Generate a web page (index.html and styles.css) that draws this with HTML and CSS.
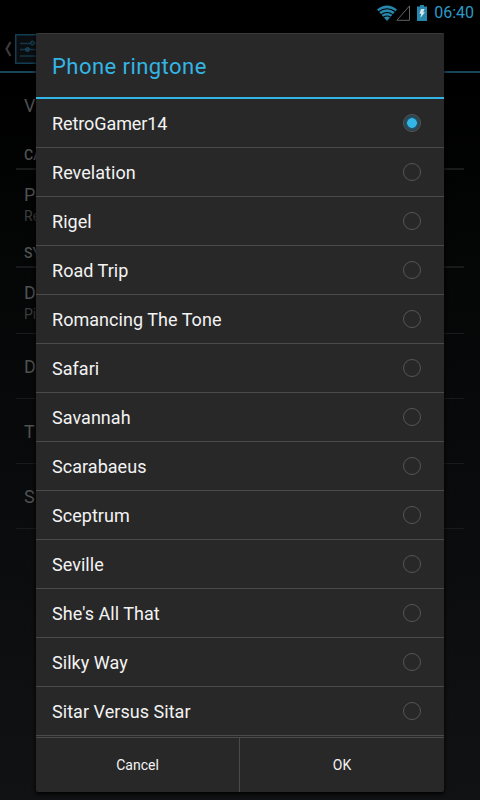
FILE: index.html
```
<!DOCTYPE html>
<html lang="en">
<head>
<meta charset="utf-8">
<title>Phone ringtone</title>
<link rel="stylesheet" href="styles.css">
</head>
<body>
<div class="screen">
  <header class="status">
    <svg class="wifi" width="20" height="16" viewBox="0 0 20 16"><path d="M0 4.4Q10-3.4 20 4.4L10 16Z" fill="#2787ac"/><path d="M1.5 6.8Q10 .6 18.5 6.8M4 9.6Q10 5.4 16 9.6M6.4 12.2Q10 9.8 13.6 12.2" fill="none" stroke="#000" stroke-width="1.1"/></svg>
    <svg class="signal" width="14" height="16" viewBox="0 0 14 16"><path d="M13.500.9V15.300H.9Z" fill="none" stroke="#626262"/></svg>
    <svg class="battery" width="10" height="16" viewBox="0 0 10 16"><path d="M3 0h4v1.5h3V16H0V1.500h3Z" fill="#2787ac"/><path d="M4 4h3.500L6.200 7.200H8L3.300 13l1-4.200H2.500Z" fill="#d5e5eb"/></svg>
    <span class="clock">06:40</span>
  </header>
  <div class="actionbar">
    <svg width="9" height="16" viewBox="0 0 9 16"><path d="M6.500 1 2.500 8l4 7" fill="none" stroke="#3b3b3b" stroke-width="2.200"/></svg>
    <svg width="30" height="30" viewBox="0 0 30 30"><rect x=".75" y=".75" width="28.500" height="28.500" fill="#0b0e10" stroke="#123d52" stroke-width="1.500"/><path d="M5 9.500h20M5 15.500h20M5 22h20" stroke="#153646" stroke-width="1.300"/><circle cx="17.500" cy="9" r="2" fill="#0e202a" stroke="#17465d"/><circle cx="12.500" cy="15.500" r="2" fill="#153b4d" stroke="#17465d"/></svg>
  </div>
  <main class="settings">
    <div class="item first">V</div>
    <div class="head">CA</div>
    <div class="item double"><span>P</span><small>Re</small></div>
    <div class="head">SY</div>
    <div class="item double lined"><span>D</span><small>Pi</small></div>
    <div class="item lined">D</div>
    <div class="item lined">T</div>
    <div class="item lined">S</div>
  </main>
  <section class="dialog">
    <h1>Phone ringtone</h1>
    <ul>
      <li><span class="tight">RetroGamer14</span><i class="radio on"></i></li>
      <li><span>Revelation</span><i class="radio"></i></li>
      <li><span>Rigel</span><i class="radio"></i></li>
      <li><span>Road Trip</span><i class="radio"></i></li>
      <li><span>Romancing The Tone</span><i class="radio"></i></li>
      <li><span>Safari</span><i class="radio"></i></li>
      <li><span>Savannah</span><i class="radio"></i></li>
      <li><span>Scarabaeus</span><i class="radio"></i></li>
      <li><span>Sceptrum</span><i class="radio"></i></li>
      <li><span>Seville</span><i class="radio"></i></li>
      <li><span>She's All That</span><i class="radio"></i></li>
      <li><span>Silky Way</span><i class="radio"></i></li>
      <li><span>Sitar Versus Sitar</span><i class="radio"></i></li>
    </ul>
    <div class="buttons"><button>Cancel</button><button>OK</button></div>
  </section>
</div>
</body>
</html>
```
FILE: styles.css
```
* { box-sizing: border-box; }
body { margin: 0; background: #000; font-family: Roboto, sans-serif; }
.screen {
  position: relative;
  width: 480px;
  height: 800px;
  overflow: hidden;
  background: linear-gradient(#000 0, #000 90px, #040505 250px, #111214 800px);
}
.status {
  height: 25px;
  display: flex;
  align-items: center;
  justify-content: flex-end;
  padding-right: 6px;
  background: #000;
}
.status svg { display: block; }
.wifi { margin-right: -1px; }
.signal { margin-right: 7px; }
.battery { margin-right: 7px; }
.clock { color: #2b9ac6; font-size: 16px; line-height: 25px; }
.actionbar {
  height: 48px;
  display: flex;
  align-items: center;
  gap: 2px;
  padding: 2px 0 0 4px;
  border-bottom: 2px solid #14465a;
}
.settings { padding: 0 16px; color: #505152; font-size: 18px; }
.item {
  height: 65px;
  padding: 2px 0 0 8px;
  display: flex;
  flex-direction: column;
  justify-content: center;
  line-height: 22px;
}
.item.first { padding-top: 0; }
.item small { font-size: 14px; line-height: 20px; color: #3b3c3d; }
.lined { border-bottom: 1px solid #181a1b; }
.double { height: 66px; padding-top: 4px; }
.head {
  height: 32px;
  padding: 7px 0 0 8px;
  font-size: 14px;
  font-weight: 500;
  line-height: 20px;
  border-bottom: 2px solid #181a1b;
}
.dialog {
  position: absolute;
  left: 36px;
  top: 33px;
  width: 408px;
  height: 759px;
  background: #282828;
  border-radius: 2px;
  box-shadow: inset 0 1px #393939, 0 2px 4px #000;
  color: #f3f3f3;
}
h1 {
  margin: 0;
  height: 66px;
  padding: 1px 0 0 16px;
  border-bottom: 2px solid #33b5e5;
  color: #33b5e5;
  font-size: 22px;
  font-weight: 400;
  line-height: 66px;
  letter-spacing: .45px;
}
ul { list-style: none; margin: 0; padding: 0; }
li {
  height: 49px;
  display: flex;
  align-items: center;
  justify-content: space-between;
  padding: 0 23px 0 16px;
  border-bottom: 1px solid #4a4a4a;
  font-size: 18px;
  letter-spacing: .04px;
}
.tight { letter-spacing: -.09px; }
.radio {
  width: 18px;
  height: 18px;
  border: 1px solid #555;
  border-radius: 50%;
}
.radio.on { background: radial-gradient(circle, #33b5e5 0 4.500px, #22566a 5.200px, #2a3d45 8px); }
.buttons {
  height: 55px;
  margin-top: 1px;
  border-top: 1px solid #4a4a4a;
  display: grid;
  grid-template-columns: 204px 204px;
}
button {
  border: 0;
  padding: 0 0 1px;
  background: none;
  color: #f3f3f3;
  font: 14px Roboto, sans-serif;
}
button:first-child { border-right: 1px solid #4a4a4a; }
```
